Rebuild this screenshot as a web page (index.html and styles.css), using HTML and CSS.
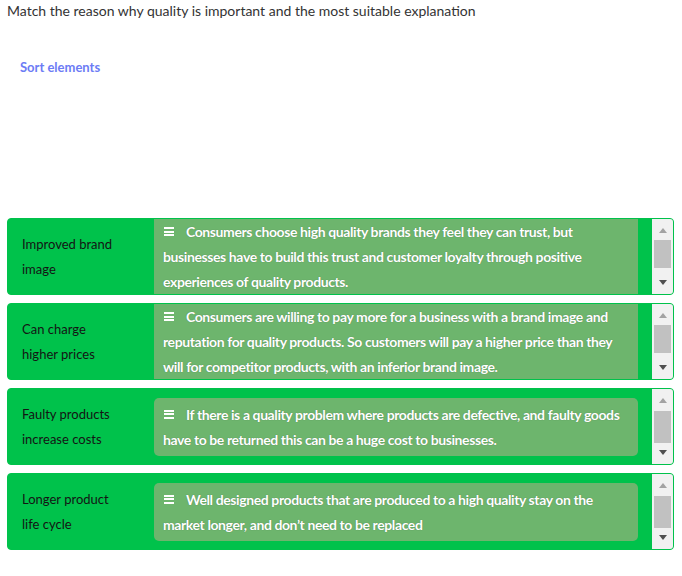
FILE: index.html
```html
<!DOCTYPE html>
<html>
<head>
<meta charset="utf-8">
<link rel="stylesheet" href="styles.css">
</head>
<body>
<div class="page">
  <p class="title">Match the reason why quality is important and the most suitable explanation</p>
  <div class="sort">Sort elements</div>
  <div class="rows">
    <div class="row">
      <div class="content">
        <div class="label">Improved brand image</div>
        <div class="answer"><span class="bars"></span>Consumers choose high quality brands they feel they can trust, but businesses have to build this trust and customer loyalty through positive experiences of quality products.</div>
      </div>
      <div class="sb"><span class="up"></span><span class="thumb t1"></span><span class="down"></span></div>
    </div>
    <div class="row">
      <div class="content">
        <div class="label">Can charge higher prices</div>
        <div class="answer"><span class="bars"></span>Consumers are willing to pay more for a business with a brand image and reputation for quality products. So customers will pay a higher price than they will for competitor products, with an inferior brand image.</div>
      </div>
      <div class="sb"><span class="up"></span><span class="thumb t1"></span><span class="down"></span></div>
    </div>
    <div class="row">
      <div class="content">
        <div class="label">Faulty products increase costs</div>
        <div class="answer"><span class="bars"></span>If there is a quality problem where products are defective, and faulty goods have to be returned this can be a huge cost to businesses.</div>
      </div>
      <div class="sb"><span class="up"></span><span class="thumb t2"></span><span class="down"></span></div>
    </div>
    <div class="row">
      <div class="content">
        <div class="label">Longer product life cycle</div>
        <div class="answer"><span class="bars"></span>Well designed products that are produced to a high quality stay on the market longer, and don’t need to be replaced</div>
      </div>
      <div class="sb"><span class="up"></span><span class="thumb t2"></span><span class="down"></span></div>
    </div>
  </div>
</div>
</body>
</html>
```

FILE: styles.css
```css
html, body {
  margin: 0;
  padding: 0;
  background: #ffffff;
}
.page {
  padding: 0 8px 0 7px;
  font-family: Lato, "Open Sans", sans-serif;
}
.title {
  margin: 0;
  padding-top: 1px;
  font-size: 14px;
  line-height: 19px;
  color: #333333;
}
.sort {
  margin: 37px 0 0 13px;
  font-size: 13px;
  font-weight: bold;
  line-height: 20px;
  color: #6c7cf5;
}
.rows {
  margin-top: 141px;
  display: flex;
  flex-direction: column;
  gap: 8px;
}
.row {
  display: flex;
  height: 77px;
  box-sizing: border-box;
  border: 1px solid #00c24b;
  border-radius: 4px;
  background: #00c24b;
  overflow: hidden;
}
.content {
  flex: 1;
  display: flex;
  align-items: center;
  overflow: hidden;
}
.label {
  width: 146px;
  box-sizing: border-box;
  padding: 0 40px 0 14px;
  font-size: 13px;
  line-height: 25px;
  color: #141414;
  flex: none;
}
.answer {
  flex: 1;
  margin: 9px 14px 9px 0;
  padding: 4px 9px;
  background: #6db56d;
  border-radius: 5px;
  color: #ffffff;
  font-size: 14px;
  font-weight: bold;
  letter-spacing: -0.4px;
  line-height: 25px;
  text-shadow: 0 0 1px rgba(0, 0, 0, 0.35);
}
.bars {
  display: inline-block;
  width: 10px;
  height: 9px;
  margin: 0 12px 0 1px;
  vertical-align: 1px;
  background:
    linear-gradient(#ffffff, #ffffff) 0 0 / 10px 2px no-repeat,
    linear-gradient(#ffffff, #ffffff) 0 3.5px / 10px 2px no-repeat,
    linear-gradient(#ffffff, #ffffff) 0 7px / 10px 2px no-repeat;
}
.sb {
  flex: none;
  width: 21px;
  background: #f1f1f1;
  display: flex;
  flex-direction: column;
  align-items: center;
}
.up {
  margin-top: 9px;
  width: 0;
  height: 0;
  border-left: 4px solid transparent;
  border-right: 4px solid transparent;
  border-bottom: 5px solid #a3a3a3;
}
.thumb {
  width: 17px;
  background: #c1c1c1;
}
.t1 {
  margin-top: 7px;
  height: 28px;
}
.t2 {
  margin-top: 8px;
  height: 32px;
}
.down {
  margin-top: auto;
  margin-bottom: 9px;
  width: 0;
  height: 0;
  border-left: 4px solid transparent;
  border-right: 4px solid transparent;
  border-top: 5px solid #505050;
}
```
